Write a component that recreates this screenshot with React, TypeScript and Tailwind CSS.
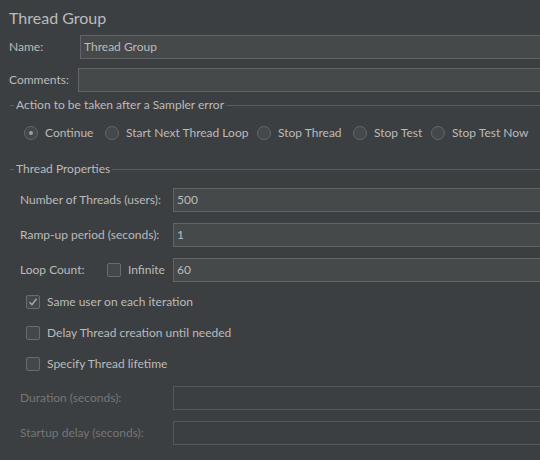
import type { ReactNode } from "react";

const font = { fontFamily: 'Lato, "Noto Sans", sans-serif' };

function Field({ value, disabled }: { value?: string; disabled?: boolean }) {
  return (
    <div
      className={`flex h-[24px] flex-1 items-center border px-[3px] ${
        disabled ? "border-[#555759] bg-[#3c3f41]" : "border-[#646464] bg-[#45494a] text-[#bbbbbb]"
      }`}
    >
      {value}
    </div>
  );
}

function Check({ checked }: { checked?: boolean }) {
  return (
    <span className="flex h-[14px] w-[14px] shrink-0 items-center justify-center rounded-[2px] border border-[#6b6b6b] bg-[#43494a]">
      {checked && (
        <svg width="10" height="10" viewBox="0 0 10 10" fill="none">
          <path d="M1.5 5.2 L4 7.8 L8.6 1.8" stroke="#a9a9a9" strokeWidth="1.4" />
        </svg>
      )}
    </span>
  );
}

function Radio({ selected, label }: { selected?: boolean; label: string }) {
  return (
    <div className="flex items-center gap-[7px]">
      <span className="flex h-[14px] w-[14px] shrink-0 items-center justify-center rounded-full border border-[#666666] bg-[#43494a]">
        {selected && <span className="h-[4px] w-[4px] rounded-full bg-[#a0a0a0]" />}
      </span>
      <span className="whitespace-nowrap">{label}</span>
    </div>
  );
}

function Legend({ children }: { children: ReactNode }) {
  return (
    <div className="flex h-[14px] items-center pl-[10px]">
      <span className="h-px w-[4px] bg-[#5a5d5f]" />
      <span className="whitespace-nowrap px-[2px]">{children}</span>
      <span className="h-px flex-1 bg-[#5a5d5f]" />
    </div>
  );
}

function Row({ label, children, disabled }: { label: ReactNode; children: ReactNode; disabled?: boolean }) {
  return (
    <div className="flex h-[24px] items-center pl-[20px]">
      <div className={`w-[153px] shrink-0 whitespace-nowrap ${disabled ? "text-[#747678]" : ""}`}>{label}</div>
      {children}
    </div>
  );
}

export default function App() {
  return (
    <div className="h-[460px] w-[540px] overflow-hidden bg-[#3c3f41] text-[12px] text-[#bbbbbb]" style={font}>
      <div className="w-[560px]">
        <div className="flex h-[35px] items-center pl-[9px] text-[16px]">Thread Group</div>
        <div className="flex h-[24px] items-center pl-[9px]">
          <div className="w-[71px] shrink-0">Name:</div>
          <Field value="Thread Group" />
        </div>
        <div className="mt-[9px] flex h-[24px] items-center pl-[9px]">
          <div className="w-[69px] shrink-0">Comments:</div>
          <Field />
        </div>
        <div className="mt-[6px]">
          <Legend>Action to be taken after a Sampler error</Legend>
        </div>
        <div className="mt-[7px] flex h-[28px] items-center pl-[24px]">
          <div className="w-[81px] shrink-0">
            <Radio selected label="Continue" />
          </div>
          <div className="w-[152px] shrink-0">
            <Radio label="Start Next Thread Loop" />
          </div>
          <div className="w-[96px] shrink-0">
            <Radio label="Stop Thread" />
          </div>
          <div className="w-[78px] shrink-0">
            <Radio label="Stop Test" />
          </div>
          <Radio label="Stop Test Now" />
        </div>
        <div className="mt-[15px]">
          <Legend>Thread Properties</Legend>
        </div>
        <div className="mt-[12px] flex flex-col gap-[11px]">
          <Row label="Number of Threads (users):">
            <Field value="500" />
          </Row>
          <Row label="Ramp-up period (seconds):">
            <Field value="1" />
          </Row>
          <Row
            label={
              <div className="flex items-center">
                <span className="w-[87px]">Loop Count:</span>
                <Check />
                <span className="ml-[7px]">Infinite</span>
              </div>
            }
          >
            <Field value="60" />
          </Row>
        </div>
        <div className="mt-[9px] flex flex-col gap-[9px] pl-[26px]">
          {[
            { label: "Same user on each iteration", checked: true },
            { label: "Delay Thread creation until needed" },
            { label: "Specify Thread lifetime" },
          ].map((c) => (
            <div key={c.label} className="flex h-[22px] items-center gap-[7px]">
              <Check checked={c.checked} />
              <span>{c.label}</span>
            </div>
          ))}
        </div>
        <div className="mt-[11px] flex flex-col gap-[11px]">
          <Row label="Duration (seconds):" disabled>
            <Field disabled />
          </Row>
          <Row label="Startup delay (seconds):" disabled>
            <Field disabled />
          </Row>
        </div>
      </div>
    </div>
  );
}
